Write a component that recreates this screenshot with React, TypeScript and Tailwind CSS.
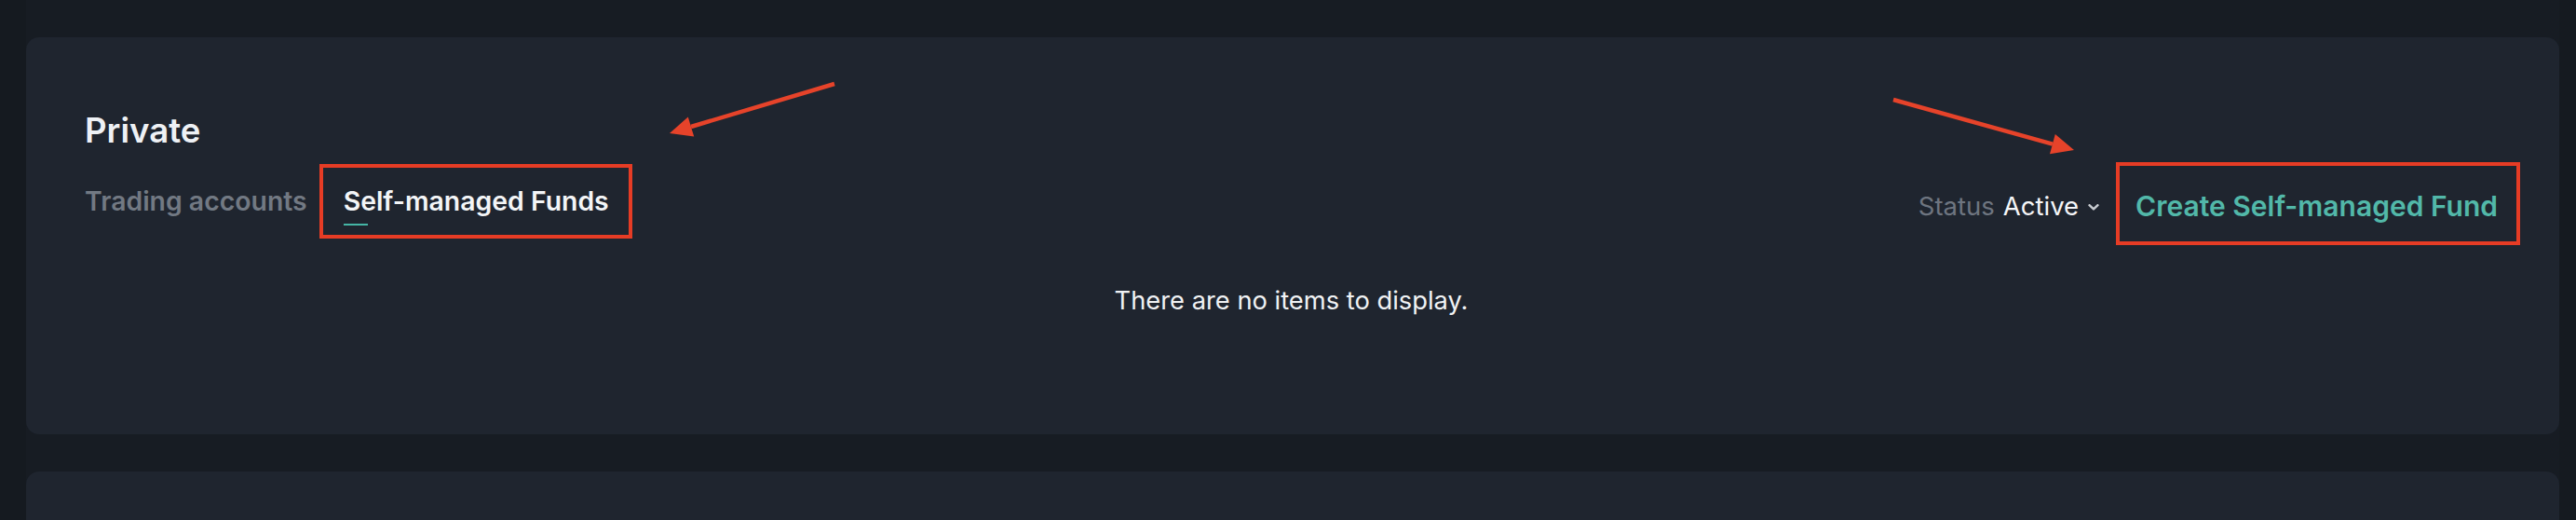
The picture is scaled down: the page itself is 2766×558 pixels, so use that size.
import React, { useState } from "react";

const tabs = ["Trading accounts", "Self-managed Funds"];

function Chevron() {
  return (
    <svg width="12" height="7" viewBox="0 0 12 7" className="mt-[3px]">
      <path d="M1.5 1.2 L6 5.4 L10.5 1.2" fill="none" stroke="#c9cdd2" strokeWidth="2.4" strokeLinecap="round" strokeLinejoin="round" />
    </svg>
  );
}

// red annotation arrows drawn over the page
function Annotations() {
  return (
    <svg className="pointer-events-none absolute left-0 top-0" width="2766" height="558">
      <line x1="896" y1="90" x2="742" y2="136" stroke="#e6432a" strokeWidth="4.5" />
      <polygon points="719,143 745.2,146.6 738.8,125.6" fill="#e6432a" />
      <line x1="2033" y1="107" x2="2204" y2="154.6" stroke="#e6432a" strokeWidth="4.5" />
      <polygon points="2227,161 2201,165.2 2206.8,144" fill="#e6432a" />
    </svg>
  );
}

export default function App() {
  const [activeTab, setActiveTab] = useState(1);

  return (
    <div
      className="relative flex h-[558px] overflow-hidden bg-[#151a20]"
      style={{ fontFamily: "Inter, 'Noto Sans', sans-serif" }}
    >
      <div className="ml-[28px] mr-[18px] flex flex-1 flex-col gap-[40px] bg-[#171c23] pt-[40px]">
        {/* Private card */}
        <div className="relative h-[426px] shrink-0 rounded-[14px] bg-[#1f252f] pl-[63px] pr-[66px] pt-[78px]">
          <h2 className="text-[36.6px] font-semibold leading-[44px] text-[#eef1f5]">Private</h2>

          <div className="mt-[37px] flex items-start justify-between">
            <div className="flex gap-[39px]">
              {tabs.map((t, i) => (
                <button key={t} onClick={() => setActiveTab(i)} className="flex flex-col items-start">
                  <span
                    className={`text-[28.4px] font-semibold leading-[34px] ${
                      i === activeTab ? "text-[#f3f5f7]" : "text-[#727983]"
                    }`}
                  >
                    {t}
                  </span>
                  <span className={`mt-[7px] h-[2px] w-[26px] ${i === activeTab ? "bg-[#45b5a5]" : "bg-transparent"}`} />
                </button>
              ))}
            </div>

            <div className="mt-[4px] flex items-center">
              <div className="flex items-center text-[27.5px] leading-[36px]">
                <span className="text-[#6e7580]">Status</span>
                <span className="ml-[9px] text-[#f5f6f8]">Active</span>
                <span className="ml-[10px]">
                  <Chevron />
                </span>
              </div>
              <button className="ml-[39px] text-[30px] font-semibold leading-[36px] text-[#52b8a9]">
                Create Self-managed Fund
              </button>
            </div>
          </div>

          <p className="mt-[64px] text-center text-[27.3px] leading-[33px] text-[#f0f2f4]">
            There are no items to display.
          </p>

          {/* annotation boxes */}
          <div className="pointer-events-none absolute left-[315px] top-[136px] h-[80px] w-[336px] border-4 border-[#e63c25]" />
          <div className="pointer-events-none absolute left-[2244px] top-[134px] h-[89px] w-[434px] border-4 border-[#e63c25]" />
        </div>

        {/* next card, cut off */}
        <div className="h-[300px] shrink-0 rounded-[14px] bg-[#1f252f]" />
      </div>

      <Annotations />
    </div>
  );
}
